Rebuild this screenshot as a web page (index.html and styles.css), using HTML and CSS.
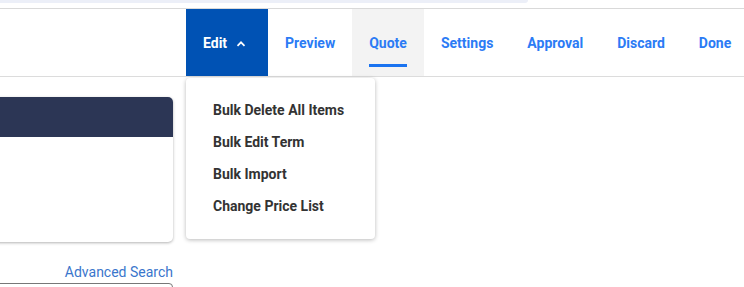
FILE: index.html
```html
<!DOCTYPE html>
<html>
<head>
<meta charset="utf-8">
<link rel="stylesheet" href="styles.css">
</head>
<body>
<div class="topstrip"><div class="searchbar"></div></div>
<nav class="nav">
  <div class="spacer"></div>
  <div class="tab tab-edit">
    <span class="label">Edit</span>
    <svg class="chev" width="10" height="7" viewBox="0 0 10 7"><path d="M1.5 5.8 L5 2.3 L8.5 5.8" fill="none" stroke="#fff" stroke-width="1.7"/></svg>
    <div class="menu">
      <div class="menu-item">Bulk Delete All Items</div>
      <div class="menu-item">Bulk Edit Term</div>
      <div class="menu-item">Bulk Import</div>
      <div class="menu-item">Change Price List</div>
    </div>
  </div>
  <div class="tab"><span class="label">Preview</span></div>
  <div class="tab tab-active"><span class="label">Quote</span></div>
  <div class="tab"><span class="label">Settings</span></div>
  <div class="tab"><span class="label">Approval</span></div>
  <div class="tab"><span class="label">Discard</span></div>
  <div class="tab"><span class="label">Done</span></div>
</nav>
<main class="main">
  <div class="leftcol">
    <div class="card">
      <div class="card-head"></div>
      <div class="card-body"></div>
    </div>
    <a class="adv">Advanced Search</a>
    <div class="input"></div>
  </div>
</main>
</body>
</html>
```
FILE: styles.css
```css
html, body {
  margin: 0;
  padding: 0;
  background: #fff;
  overflow: hidden;
}
body {
  font-family: Roboto, "Liberation Sans", sans-serif;
  width: 744px;
  height: 287px;
}
.topstrip {
  height: 8px;
  border-bottom: 1px solid #d9d9d9;
}
.searchbar {
  width: 528px;
  height: 3px;
  background: #eceff8;
  border-bottom-right-radius: 4px;
}
.nav {
  display: flex;
  height: 67px;
  border-bottom: 1px solid #dcdcdc;
  white-space: nowrap;
}
.spacer {
  width: 186px;
  flex: none;
}
.tab {
  flex: none;
  display: flex;
  align-items: center;
  padding: 0 17px;
  font-size: 14px;
  font-weight: 700;
  color: #2b7bf5;
  position: relative;
}
.tab-edit {
  background: #0052b4;
  color: #fff;
  padding-right: 22px;
}
.chev {
  margin-left: 9px;
  margin-top: 1px;
}
.tab-active {
  background: #f3f3f3;
}
.tab-active .label {
  position: relative;
}
.tab-active .label::after {
  content: "";
  position: absolute;
  left: 0;
  right: 0;
  top: 29px;
  height: 3px;
  background: #1a73f0;
}
.menu {
  position: absolute;
  left: 0;
  top: 69px;
  width: 189px;
  padding: 16px 0 17px;
  background: #fff;
  border-radius: 4px;
  box-shadow: 0 1px 4px rgba(0, 0, 0, 0.28);
  z-index: 5;
}
.menu-item {
  height: 32px;
  line-height: 32px;
  padding-left: 27px;
  color: #333;
  font-size: 14px;
  font-weight: 700;
}
.main {
  display: flex;
  height: 210px;
  overflow: hidden;
}
.leftcol {
  width: 183px;
  margin-left: -10px;
  padding-top: 20px;
  display: flex;
  flex-direction: column;
}
.card {
  flex: none;
  height: 145px;
  border-radius: 5px;
  background: #fff;
  box-shadow: 0 1px 3px rgba(0, 0, 0, 0.3);
  overflow: hidden;
}
.card-head {
  height: 40px;
  background: #2c3655;
}
.adv {
  align-self: flex-end;
  margin-top: 22px;
  font-size: 14px;
  line-height: 16px;
  color: #3a76cc;
}
.input {
  flex: none;
  margin-top: 3px;
  height: 30px;
  border: 1px solid #777;
  border-radius: 4px;
}
```
